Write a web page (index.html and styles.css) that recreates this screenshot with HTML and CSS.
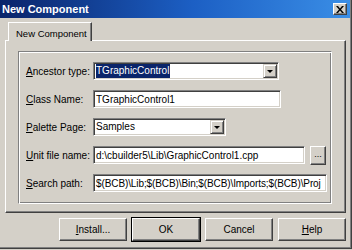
FILE: index.html
```html
<!DOCTYPE html>
<html>
<head>
    <title>New Component</title>
    <link rel="stylesheet" href="styles.css">
</head>
<body>
    <div class="window">
        <div class="titlebar">
            <span class="title">New Component</span>
            <span class="close">
                <svg width="8" height="7" viewBox="0 0 8 7"><path d="M0 0h2l2 2.5 2-2.5h2l-3 3.5 3 3.5h-2l-2-2.5-2 2.5h-2l3-3.5z" fill="#000"/></svg>
            </span>
        </div>

        <div class="tabs">
            <div class="tab">New Component</div>
        </div>
        <div class="panel">
            <div class="group">
                <div class="row">
                    <label class="lbl"><u>A</u>ncestor type:</label>
                    <div class="combo wide">
                        <div class="field"><span class="sel">TGraphicControl</span></div>
                        <div class="drop"><span class="arrow"></span></div>
                    </div>
                </div>
                <div class="row">
                    <label class="lbl"><u>C</u>lass Name:</label>
                    <div class="edit wide2">TGraphicControl1</div>
                </div>
                <div class="row">
                    <label class="lbl"><u>P</u>alette Page:</label>
                    <div class="combo short">
                        <div class="field">Samples</div>
                        <div class="drop"><span class="arrow"></span></div>
                    </div>
                </div>
                <div class="row">
                    <label class="lbl"><u>U</u>nit file name:</label>
                    <div class="edit unit">d:\cbuilder5\Lib\GraphicControl1.cpp</div>
                    <div class="dots">...</div>
                </div>
                <div class="row">
                    <label class="lbl"><u>S</u>earch path:</label>
                    <div class="edit path">$(BCB)\Lib;$(BCB)\Bin;$(BCB)\Imports;$(BCB)\Proj</div>
                </div>
            </div>
        </div>

        <div class="buttons">
            <div class="btn"><u>I</u>nstall...</div>
            <div class="btn default">OK</div>
            <div class="btn">Cancel</div>
            <div class="btn"><u>H</u>elp</div>
        </div>
    </div>
</body>
</html>
```

FILE: styles.css
```css
body {
    margin: 0;
    background: #d4d0c8;
    font-family: 'Liberation Sans', Arial, sans-serif;
    font-size: 10px;
    color: #000;
}
.window {
    width: 351px;
    height: 248px;
    background: #d4d0c8;
    border-right: 1px solid #404040;
    border-bottom: 1px solid #404040;
    box-shadow: inset -1px -1px #808080;
}
.titlebar {
    height: 18px;
    width: 350px;
    background: linear-gradient(to right, #0a246a, #1c5fc4 55%, #3a8ee6);
    display: flex;
    align-items: center;
    justify-content: space-between;
}
.title {
    color: #fff;
    font-weight: bold;
    font-size: 11px;
    padding-left: 2px;
}
.close {
    width: 14px;
    height: 12px;
    margin-right: 3px;
    background: #d4d0c8;
    border: 1px solid;
    border-color: #fff #404040 #404040 #fff;
    box-shadow: inset -1px -1px #808080;
    display: flex;
    align-items: center;
    justify-content: center;
    box-sizing: border-box;
}
.tabs {
    display: flex;
    padding: 4px 0 0 8px;
    height: 18px;
}
.tab {
    width: 84px;
    height: 19px;
    box-sizing: border-box;
    border: 1px solid;
    border-color: #fff #404040 transparent #fff;
    border-bottom: none;
    box-shadow: inset -1px 0 #808080;
    font-size: 9.5px;
    padding: 5px 0 0 7px;
    background: #d4d0c8;
    position: relative;
    z-index: 1;
}
.panel {
    margin-left: 5px;
    width: 341px;
    height: 173px;
    box-sizing: border-box;
    border: 1px solid;
    border-color: #fff #404040 #404040 #fff;
    box-shadow: inset -1px -1px #808080;
    padding: 10px 13px 8px 12px;
}
.group {
    height: 153px;
    box-sizing: border-box;
    border: 1px solid;
    border-color: #808080 #fff #fff #808080;
    box-shadow: inset 1px 1px #fff, inset -1px -1px #808080;
    padding: 10px 0 0 7px;
    display: flex;
    flex-direction: column;
    gap: 10px;
}
.row {
    display: flex;
    align-items: center;
    height: 18px;
}
.lbl {
    width: 67px;
    flex: none;
    white-space: nowrap;
}
.edit, .field {
    height: 18px;
    box-sizing: border-box;
    background: #fff;
    white-space: nowrap;
    overflow: hidden;
    padding: 3px 0 0 2px;
}
.edit {
    border: 1px solid;
    border-color: #808080 #fff #fff #808080;
    box-shadow: inset 1px 1px #404040, inset -1px -1px #d4d0c8;
}
.combo {
    display: flex;
    height: 18px;
    box-sizing: border-box;
    border: 1px solid;
    border-color: #808080 #fff #fff #808080;
    box-shadow: inset 1px 1px #404040, inset -1px -1px #d4d0c8;
    padding: 1px;
    background: #fff;
}
.combo .field {
    flex: 1;
    height: 14px;
    padding: 1px 0 0 1px;
}
.sel {
    background: #0a246a;
    color: #fff;
    padding: 1px 1px 2px 0;
}
.drop {
    width: 14px;
    height: 14px;
    box-sizing: border-box;
    background: #d4d0c8;
    border: 1px solid;
    border-color: #d4d0c8 #404040 #404040 #d4d0c8;
    box-shadow: inset 1px 1px #fff, inset -1px -1px #808080;
    display: flex;
    align-items: center;
    justify-content: center;
}
.arrow {
    width: 0;
    height: 0;
    border-left: 3px solid transparent;
    border-right: 3px solid transparent;
    border-top: 3px solid #000;
}
.wide { width: 186px; }
.wide2 { width: 188px; }
.short { width: 133px; }
.unit { width: 212px; }
.path {
    width: 234px;
    letter-spacing: -0.1px;
}
.dots {
    width: 16px;
    height: 19px;
    margin-left: 5px;
    box-sizing: border-box;
    border: 1px solid;
    border-color: #fff #404040 #404040 #fff;
    box-shadow: inset -1px -1px #808080;
    text-align: center;
    line-height: 15px;
    font-size: 9px;
}
.buttons {
    display: flex;
    justify-content: flex-end;
    gap: 5px;
    padding: 5px 5px 0 0;
}
.btn {
    width: 68px;
    height: 23px;
    box-sizing: border-box;
    border: 1px solid;
    border-color: #fff #404040 #404040 #fff;
    box-shadow: inset -1px -1px #808080;
    display: flex;
    align-items: center;
    justify-content: center;
}
.btn.default {
    outline: 1px solid #000;
}
```
